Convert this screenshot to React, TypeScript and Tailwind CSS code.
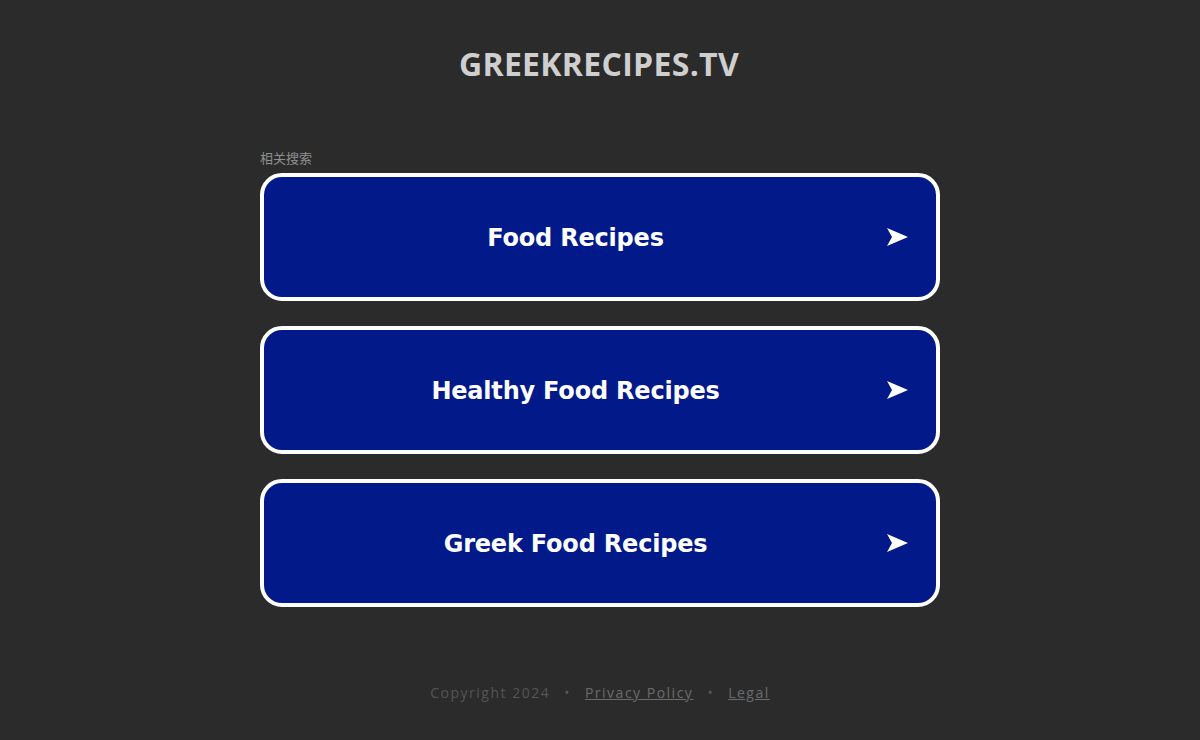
const links = ["Food Recipes", "Healthy Food Recipes", "Greek Food Recipes"];

function Arrow() {
  return (
    <svg width="21" height="18" viewBox="0 0 21 18" aria-hidden="true">
      <path d="M0 0 L21 9 L0 18 L5 9 Z" fill="#ffffff" />
    </svg>
  );
}

export default function App() {
  return (
    <div className="min-h-[740px] bg-[#2b2b2b] flex flex-col items-center">
      <h1 className="mt-[44px] text-[32px] leading-[40px] font-bold text-[#cfcfcf] font-['Open_Sans',sans-serif] tracking-[0.3px] -translate-x-px">
        GREEKRECIPES.TV
      </h1>

      <div className="mt-[65px] w-[680px]">
        <div className="text-[13px] leading-[18px] text-[#8f8f8f] font-['Noto_Sans_CJK_SC',sans-serif]">
          相关搜索
        </div>
        <div className="mt-[6px] flex flex-col gap-[25px]">
          {links.map((label) => (
            <a
              key={label}
              href="#"
              className="flex items-center h-[128px] rounded-[22px] border-4 border-white bg-[#02198a] pl-0 pr-[28px]"
            >
              <span className="flex-1 text-center text-[24px] font-bold text-white font-['Verdana','DejaVu_Sans',sans-serif] tracking-[-0.2px] pt-[2px]">
                {label}
              </span>
              <Arrow />
            </a>
          ))}
        </div>
      </div>

      <footer className="mt-[75px] text-[14px] tracking-[1.5px] text-[#555555] font-['Open_Sans',sans-serif] flex items-center gap-[14px]">
        <span>Copyright 2024</span>
        <span>•</span>
        <a href="#" className="underline text-[#6b6b6b]">
          Privacy Policy
        </a>
        <span>•</span>
        <a href="#" className="underline text-[#6b6b6b]">
          Legal
        </a>
      </footer>
    </div>
  );
}
